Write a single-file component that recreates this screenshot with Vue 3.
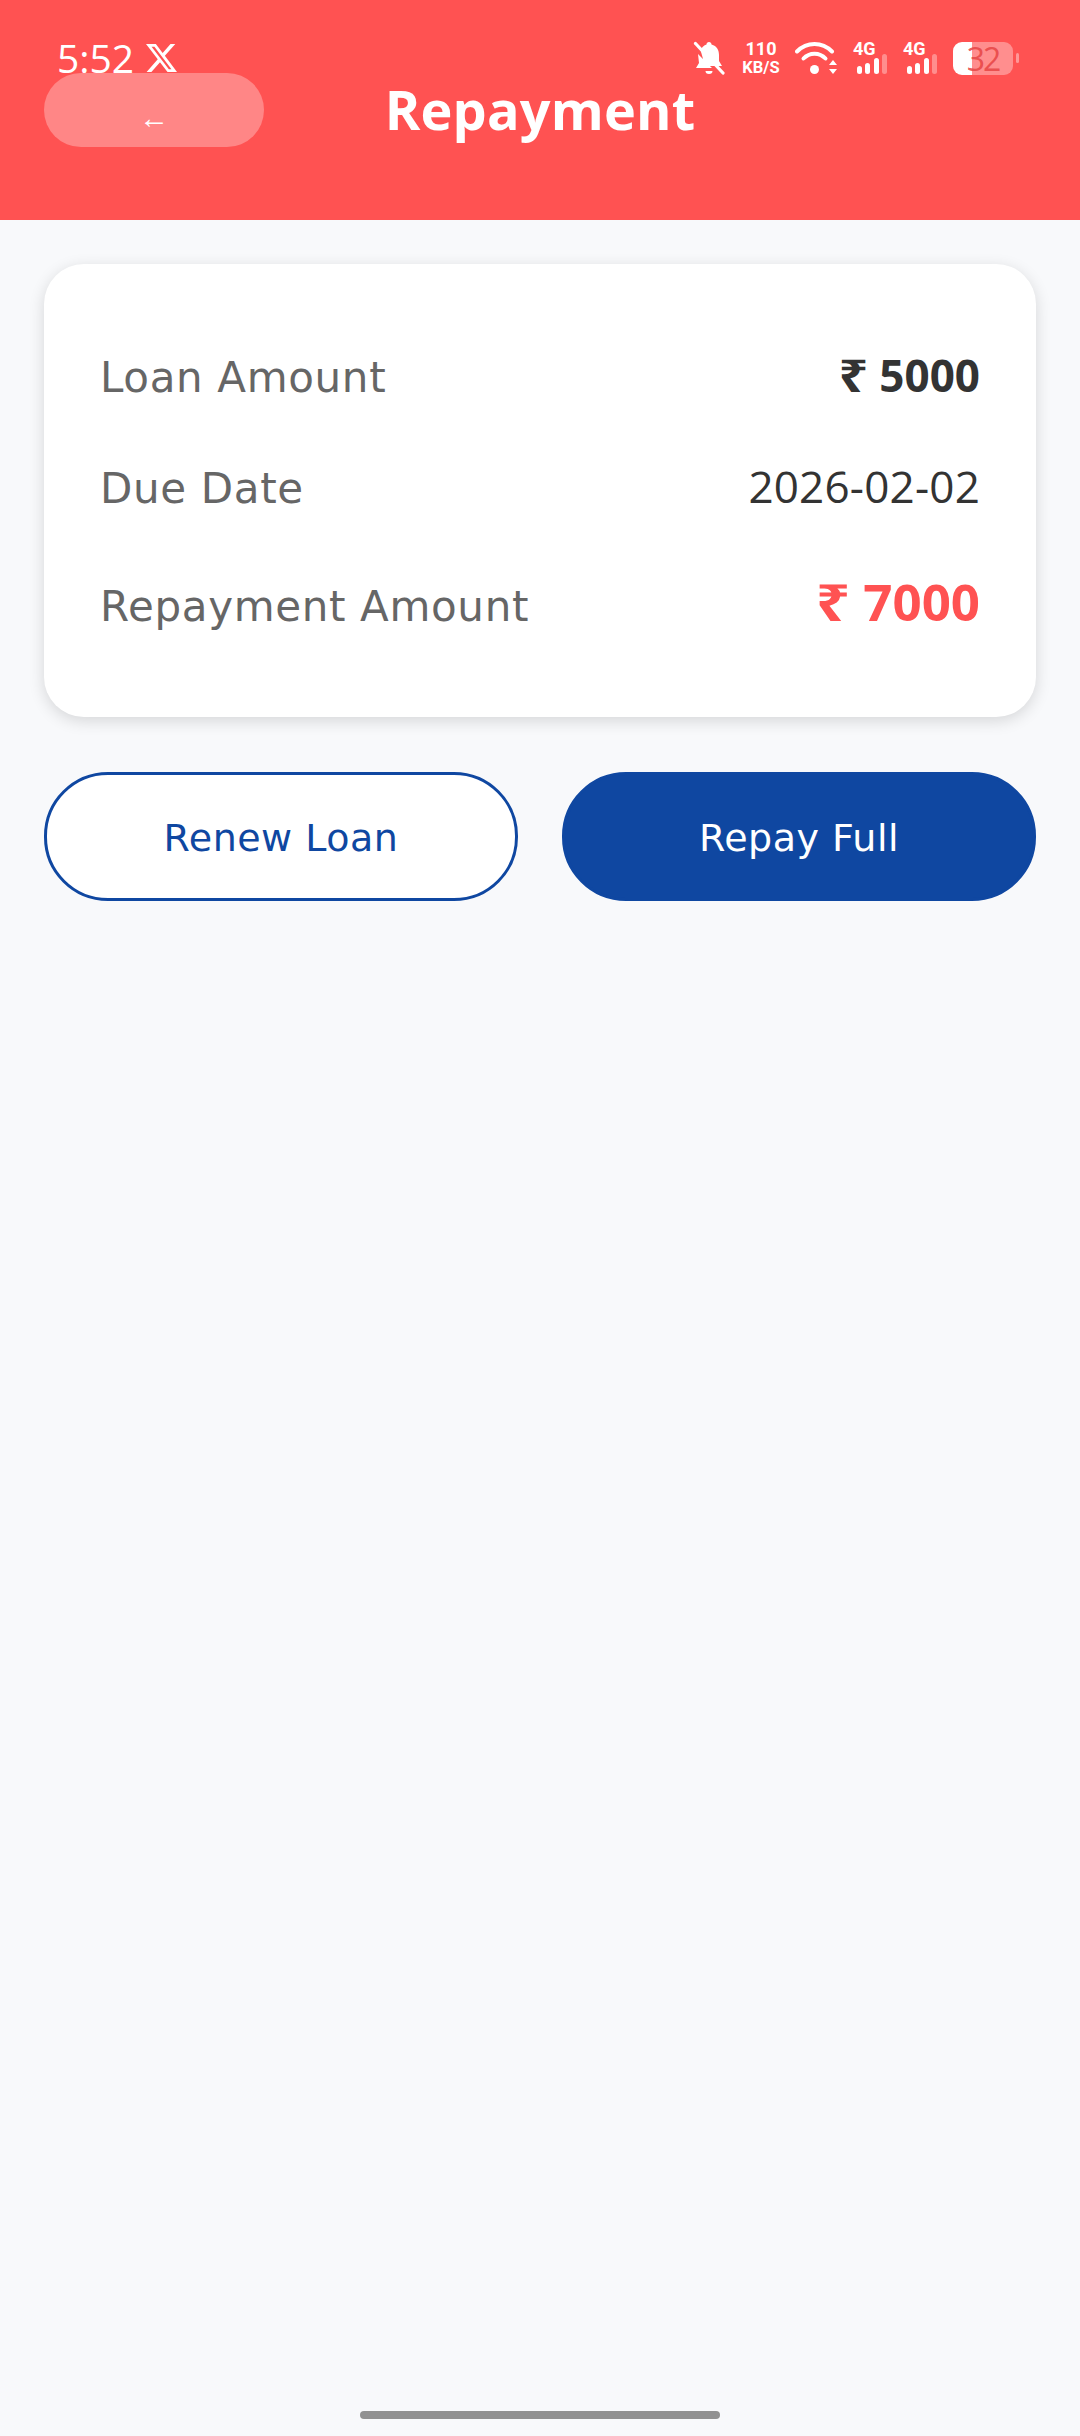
<template>
  <div class="page">
    <header class="top">
      <!-- status bar sits over the header -->
      <div class="status">
        <div class="status-left">
          <span class="time">5:52</span>
          <svg class="x-logo" width="31" height="30" viewBox="1.250 2.250 21.500 19.500">
            <path d="M18.244 2.250h3.308l-7.227 8.260 8.502 11.240H16.170l-5.214-6.817L4.990 21.750H1.680l7.730-8.835L1.254 2.250H8.080l4.713 6.231zm-1.161 17.520h1.833L7.084 4.126H5.117z" fill="#fff" />
          </svg>
        </div>
        <div class="status-right">
          <svg class="bell" width="32" height="34" viewBox="0 0 32 34">
            <path d="M16 1c1.500 0 2.500 1 2.500 2.500C24 5 26 9 26 14v6l3 5H12L7.500 9C9 6 11 4.500 13.500 3.500 13.500 2 14.500 1 16 1zM5 13l14 14H3l3-5z" fill="#fff" />
            <path d="M12.500 30h7a3.500 3 0 0 1-7 0z" fill="#fff" />
            <path d="M2.500 2.500L30 32" stroke="#fff" stroke-width="3.200" stroke-linecap="round" />
          </svg>
          <div class="speed"><span>110</span><span class="unit">KB/S</span></div>
          <svg class="wifi" width="42" height="33" viewBox="0 0 42 33">
            <path d="M2 9.500C12 -0.500 27 -0.500 37 9.500" stroke="#fff" stroke-width="4" fill="none" stroke-linecap="round" />
            <path d="M8.500 16.500C14.500 10 24.500 10 30.500 16.500" stroke="#fff" stroke-width="4" fill="none" stroke-linecap="round" />
            <circle cx="19.500" cy="27.500" r="4.500" fill="#fff" />
            <path d="M38 18l4 5h-8zM38 32l-4-5h8z" fill="#fff" />
          </svg>
          <div v-for="n in 2" :key="n" class="net">
            <span class="net-label">4G</span>
            <div class="net-bars">
              <i class="b1"></i><i class="b2"></i><i class="b3"></i><i class="b4"></i>
            </div>
          </div>
          <div class="battery">
            <div class="battery-body"><span>32</span></div>
            <div class="battery-tip"></div>
          </div>
        </div>
      </div>

      <button class="back">←</button>
      <h1>Repayment</h1>
    </header>

    <main class="content">
      <section class="card">
        <div class="row row-loan">
          <span class="label">Loan Amount</span>
          <span class="amount"><span class="rupee">₹</span> 5000</span>
        </div>
        <div class="row row-date">
          <span class="label">Due Date</span>
          <span class="date">2026-02-02</span>
        </div>
        <div class="row row-repay">
          <span class="label">Repayment Amount</span>
          <span class="amount big"><span class="rupee">₹</span> 7000</span>
        </div>
      </section>

      <div class="actions">
        <button class="btn outline">Renew Loan</button>
        <button class="btn solid">Repay Full</button>
      </div>
    </main>

    <div class="home-bar"></div>
  </div>
</template>

<script setup>
</script>

<style>
html, body {
  margin: 0;
  background: #f8f9fb;
}
</style>

<style scoped>
.page {
  position: relative;
  width: 1080px;
  height: 2436px;
  overflow: hidden;
  background: #f8f9fb;
  font-family: "DejaVu Sans", sans-serif;
}

.top {
  position: relative;
  height: 220px;
  box-sizing: border-box;
  padding: 73px 44px 73px;
  display: grid;
  grid-template-columns: 1fr auto 1fr;
  align-items: center;
  background: #ff5252;
}

.status {
  position: absolute;
  left: 57px;
  right: 61px;
  top: 41px;
  height: 34px;
  display: flex;
  justify-content: space-between;
  align-items: center;
  color: #fff;
}

.status-left {
  display: flex;
  align-items: center;
  gap: 12px;
}

.time {
  font-family: "Open Sans", sans-serif;
  font-size: 39px;
  line-height: 34px;
}

.status-right {
  display: flex;
  align-items: center;
}

.speed {
  display: flex;
  flex-direction: column;
  align-items: center;
  width: 38px;
  margin-left: 17px;
  font-family: "Roboto", sans-serif;
  font-weight: 700;
  font-size: 18px;
  line-height: 19px;
}

.speed .unit {
  font-size: 16.500px;
  white-space: nowrap;
}

.wifi {
  margin-left: 15px;
}

.net {
  position: relative;
  width: 34px;
  height: 32px;
  margin-left: 16px;
}

.net-label {
  position: absolute;
  left: 0;
  top: -3px;
  font-family: "Roboto", sans-serif;
  font-weight: 700;
  font-size: 18px;
  line-height: 20px;
}

.net-bars {
  position: absolute;
  left: 4px;
  bottom: 0;
  display: flex;
  align-items: flex-end;
  gap: 3.300px;
}

.net-bars i {
  display: block;
  width: 5px;
  border-radius: 3px;
  background: #fff;
}

.net-bars .b1 { height: 8px; }
.net-bars .b2 { height: 11px; }
.net-bars .b3 { height: 16px; }
.net-bars .b4 { height: 20px; background: rgba(255, 255, 255, 0.35); }

.battery {
  display: flex;
  align-items: center;
  margin-left: 16px;
}

.battery-body {
  width: 60px;
  height: 33px;
  border-radius: 9px;
  background: linear-gradient(90deg, #fff 32%, rgba(255, 255, 255, 0.35) 32%);
  display: flex;
  justify-content: center;
  align-items: center;
  color: rgba(232, 72, 72, 0.9);
  font-family: "Open Sans", sans-serif;
  font-size: 32px;
  letter-spacing: -2px;
  line-height: 33px;
}

.battery-tip {
  width: 3px;
  height: 10px;
  margin-left: 3px;
  border-radius: 2px;
  background: rgba(255, 255, 255, 0.4);
}

.back {
  justify-self: start;
  width: 220px;
  height: 74px;
  padding: 16px 0 0;
  border: 0;
  border-radius: 37px;
  background: rgba(255, 255, 255, 0.3);
  color: #fff;
  font-family: "Liberation Sans", sans-serif;
  font-size: 30px;
}

h1 {
  margin: 0 0 2px;
  grid-column: 2;
  color: #fff;
  font-family: "Open Sans", sans-serif;
  font-size: 54px;
  font-weight: 700;
  letter-spacing: 0.200px;
  line-height: 72px;
}

.content {
  padding: 44px 44px 0;
}

.card {
  box-sizing: border-box;
  height: 453px;
  padding: 83px 56px 0;
  border-radius: 40px;
  background: #fff;
  box-shadow: 0 4px 16px rgba(0, 0, 0, 0.14);
}

.row {
  display: flex;
  justify-content: space-between;
  align-items: baseline;
  height: 56px;
  line-height: 56px;
}

.row-date { margin-top: 55px; }
.row-repay { margin-top: 59px; }

.label {
  color: #666;
  font-size: 42px;
  letter-spacing: 0.650px;
}

.amount,
.date {
  font-family: "Open Sans", "Noto Sans", sans-serif;
  color: #333;
  font-size: 44px;
}

.date {
  letter-spacing: 0.200px;
}

.amount {
  font-weight: 700;
}

.rupee {
  display: inline-block;
  transform: scaleX(1.180);
  transform-origin: right center;
}

.big {
  color: #ff5252;
  font-size: 51px;
}

.actions {
  display: flex;
  gap: 44px;
  margin-top: 55px;
}

.btn {
  flex: 1;
  height: 129px;
  box-sizing: border-box;
  padding: 2px 0 0;
  border: 3px solid #0f47a1;
  border-radius: 64px;
  font-family: "DejaVu Sans", sans-serif;
  font-size: 38px;
  letter-spacing: 0.500px;
}

.outline {
  background: #fff;
  color: #0f47a1;
}

.solid {
  background: #0f47a1;
  color: #fff;
}

.home-bar {
  position: absolute;
  left: 360px;
  bottom: 17px;
  width: 360px;
  height: 8px;
  border-radius: 4px;
  background: #919191;
}
</style>
